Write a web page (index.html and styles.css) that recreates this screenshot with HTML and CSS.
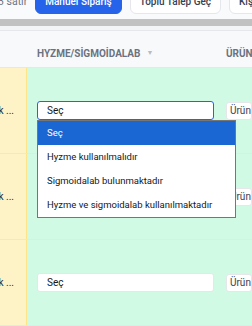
FILE: index.html
```html
<!DOCTYPE html>
<html lang="tr">
<head>
  <meta charset="UTF-8">
  <meta name="viewport" content="width=device-width, initial-scale=1">
  <title>Sipariş Tablosu</title>
  <link rel="stylesheet" href="styles.css">
</head>
<body>

  <div class="toolbar">
    <span class="row-count">3 satır</span>
    <button class="btn btn-primary">Manuel Sipariş</button>
    <button class="btn">Toplu Talep Geç</button>
    <button class="btn">Kişisel Ayarlar</button>
  </div>

  <div class="scrollbar"></div>

  <div class="table">
    <div class="table-head">
      <div class="cell cell-fixed"></div>
      <div class="cell cell-main">HYZME/SİGMOİDALAB <span class="sort">&#9660;</span></div>
      <div class="cell cell-product">ÜRÜN</div>
    </div>

    <div class="table-row">
      <div class="cell cell-fixed"><span>Stok ...</span></div>
      <div class="cell cell-main">
        <div class="select focused">Seç</div>
        <div class="dropdown">
          <div class="option active">Seç</div>
          <div class="option">Hyzme kullanılmalıdır</div>
          <div class="option">Sigmoidalab bulunmaktadır</div>
          <div class="option">Hyzme ve sigmoidalab kullanılmaktadır</div>
        </div>
      </div>
      <div class="cell cell-product"><div class="input">Ürün</div></div>
    </div>

    <div class="table-row">
      <div class="cell cell-fixed"><span>Stok ...</span></div>
      <div class="cell cell-main"><div class="select">Seç</div></div>
      <div class="cell cell-product"><div class="input">Ürün</div></div>
    </div>

    <div class="table-row">
      <div class="cell cell-fixed"><span>Stok ...</span></div>
      <div class="cell cell-main"><div class="select">Seç</div></div>
      <div class="cell cell-product"><div class="input">Ürün</div></div>
    </div>
  </div>

</body>
</html>
```

FILE: styles.css
```css
* {
  box-sizing: border-box;
  margin: 0;
  padding: 0;
}

body {
  font-family: Roboto, "Noto Sans", sans-serif;
  font-size: 10px;
  color: #111827;
  background-color: #d1fae5;
  overflow: hidden;
}

.toolbar {
  display: flex;
  align-items: center;
  gap: 8px;
  height: 35px;
  margin-top: -16px;
  background-color: #f9fafb;
  white-space: nowrap;
}

.row-count {
  margin-left: -2px;
  font-size: 10.5px;
  color: #6b7280;
}

.btn {
  height: 24px;
  padding: 0 9px;
  font-family: inherit;
  font-size: 10px;
  font-weight: 500;
  color: #374151;
  background-color: #fff;
  border: 1px solid #e5e7eb;
  border-radius: 6px;
  flex-shrink: 0;
}

.btn-primary {
  background-color: #2563eb;
  border-color: #2563eb;
  color: white;
}

.scrollbar {
  height: 7px;
  background-color: #c1c1c1;
  border-bottom: 4px solid #f3f4f6;
  box-sizing: content-box;
}

.table-head,
.table-row {
  display: grid;
  grid-template-columns: 27px 199px 1fr;
}

.table-head {
  height: 38px;
  padding-top: 8px;
  background-color: #f8f9fb;
  border-top: 1px solid #e5e7eb;
  border-bottom: 1px solid #e2e8f0;
  font-weight: 700;
  color: #6b7280;
}

.table-head .cell-fixed {
  background: none;
  border: none;
}

.sort {
  margin-left: 6px;
  font-size: 7px;
  color: #b6bcc6;
}

.table-row {
  height: 86px;
  border-bottom: 1px solid #e5e7eb;
}

.cell {
  display: flex;
  align-items: center;
  white-space: nowrap;
}

.cell-fixed {
  background-color: #fef3c7;
  border-right: 1px solid #fde68a;
  justify-content: flex-end;
  overflow: hidden;
  padding-right: 12px;
  color: #1f2937;
}

.cell-main {
  position: relative;
  padding-left: 10px;
}

.cell-product {
  overflow: hidden;
}

.select {
  width: 177px;
  height: 19px;
  padding-left: 9px;
  line-height: 17px;
  background-color: #fff;
  border: 1px solid #e5e7eb;
  border-radius: 3px;
}

.select.focused {
  border-color: #2563eb;
}

.input {
  width: 60px;
  height: 18px;
  padding-left: 3px;
  line-height: 16px;
  background-color: #fff;
  border: 1px solid #e5e7eb;
  border-radius: 3px;
  color: #374151;
}

.dropdown {
  position: absolute;
  top: 52px;
  left: 10px;
  width: 199px;
  background-color: #fff;
  border: 1px solid #767676;
  z-index: 10;
}

.option {
  height: 24px;
  line-height: 24px;
  padding-left: 9px;
  font-size: 9.5px;
}

.option.active {
  background-color: #1a66d2;
  color: white;
}
```
